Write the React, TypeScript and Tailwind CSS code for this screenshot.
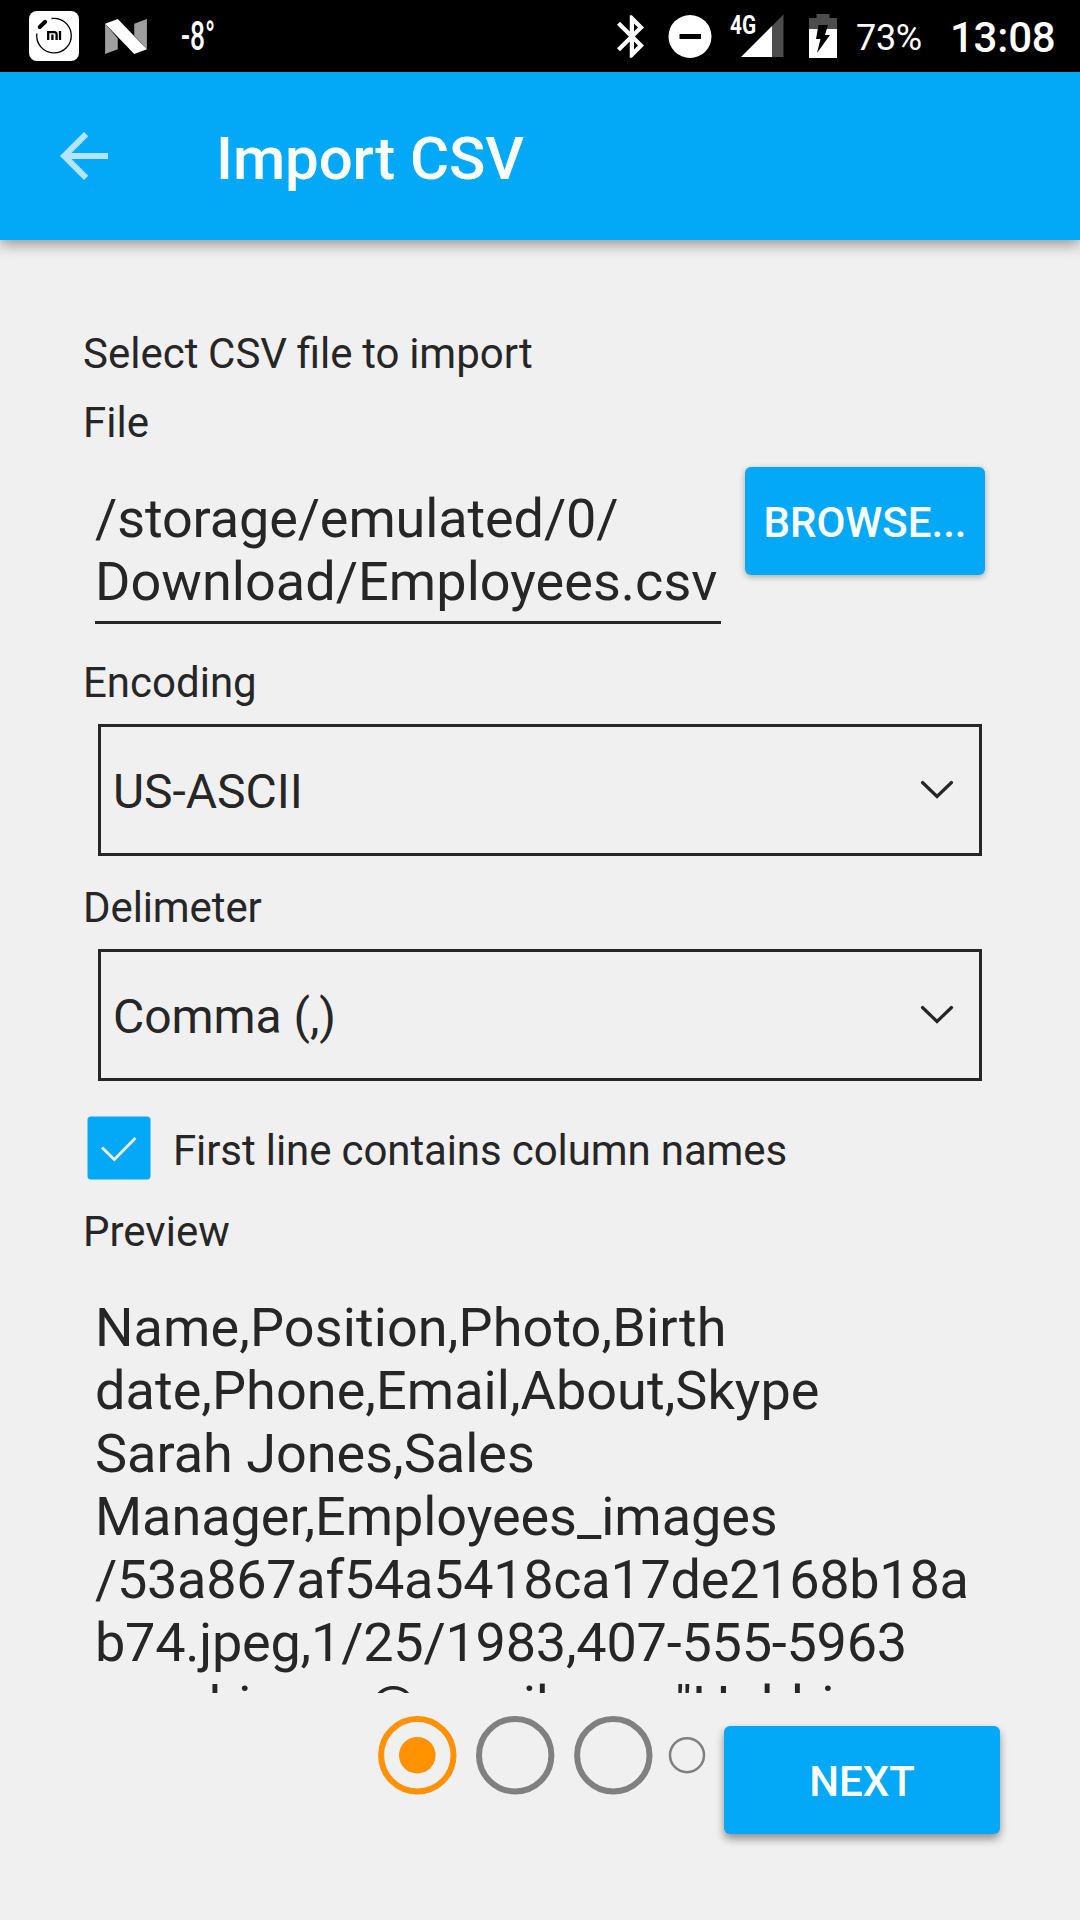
import React from "react";

const preview = [
  { text: "Name,Position,Photo,Birth", tracking: "tracking-[0.100px]" },
  { text: "date,Phone,Email,About,Skype", tracking: "tracking-[0.050px]" },
  { text: "Sarah Jones,Sales", tracking: "" },
  { text: "Manager,Employees_images", tracking: "tracking-[-0.040px]" },
  { text: "/53a867af54a5418ca17de2168b18a", tracking: "tracking-[-0.290px]" },
  { text: "b74.jpeg,1/25/1983,407-555-5963", tracking: "tracking-[-0.230px]" },
  { text: ',sarahjones@gmail.com,"Hobbies', tracking: "tracking-[-0.140px]" },
];

function StatusBar() {
  return (
    <div className="flex h-[72px] shrink-0 items-center bg-black pl-[29px] text-white">
      <svg className="h-[50px] w-[50px] shrink-0" viewBox="0 0 50 50">
        <rect x="0" y="0" width="50" height="50" rx="8" fill="#fff" />
        <path d="M22.500 7.500A17.300 17.300 0 1 1 7.800 22.500" fill="none" stroke="#000" strokeWidth="1.300" />
        <path d="M10.800 16L16.200 10.800" stroke="#000" strokeWidth="4" strokeLinecap="round" />
        <path d="M19.200 29V21.200H25.200Q27.600 21.200 27.600 23.600V29M23.400 23.600V29M31 20V29" fill="none" stroke="#000" strokeWidth="2.300" />
      </svg>
      <svg className="ml-[26px] h-[35px] w-[42px] shrink-0" viewBox="0 0 43 36">
        <path d="M0 5L13 20V31L0 36zM43 0L30 5V17L43 31z" fill="#9f9f9f" />
        <path d="M0 5L13 0L43 31L30 36z" fill="#fff" />
      </svg>
      <div className="ml-[34px] flex w-[34px] items-center pt-[1px] text-[40px] font-medium leading-[44px]">
        <span className="origin-left scale-x-[0.660] whitespace-nowrap">-8°</span>
      </div>
      <svg className="ml-[402px] h-[43px] w-[27px] shrink-0" viewBox="5 2 12.710 20">
        <path
          fill="#fff"
          d="M17.710 7.710L12 2h-1v7.590L6.410 5 5 6.410 10.590 12 5 17.590 6.410 19 11 14.410V22h1l5.710-5.710-4.300-4.290 4.300-4.290zM13 5.830l1.880 1.880L13 9.590V5.830zm1.880 10.460L13 18.170v-3.760l1.880 1.880z"
        />
      </svg>
      <svg className="ml-[24px] h-[44px] w-[44px] shrink-0" viewBox="0 0 44 44">
        <circle cx="22" cy="22.500" r="21.500" fill="#fff" />
        <rect x="11.500" y="20" width="21.500" height="5" fill="#000" />
      </svg>
      <div className="relative ml-[18px] h-[44px] w-[54px] shrink-0">
        <svg className="h-[44px] w-[54px]" viewBox="0 0 54 44">
          <path d="M53.500 0.500V43H42V12z" fill="#4d4d4d" />
          <path d="M42 12V43H11z" fill="#fff" />
        </svg>
        <span className="absolute left-0 top-[-2px] origin-left scale-x-[0.800] text-[26px] font-bold leading-[26px]">4G</span>
      </div>
      <svg className="ml-[25px] h-[44px] w-[28px] shrink-0" viewBox="0 0 28 44">
        <path d="M0 4H7.500V0H20.500V4H28V15H0z" fill="#4d4d4d" />
        <path d="M0 15H28V44H0z" fill="#fff" />
        <path d="M9.500 11H19L16 21H21L8 39L11.500 25H7z" fill="#000" />
      </svg>
      <span className="ml-[19px] pt-[3px] text-[36px] leading-[42px] tracking-[-0.300px]">73%</span>
      <span className="ml-[28px] pt-[3px] text-[42px] font-medium leading-[50px] tracking-[-0.200px]">13:08</span>
    </div>
  );
}

function Select({ value }: { value: string }) {
  return (
    <div className="ml-[15px] flex h-[132px] w-[884px] items-center justify-between border-[3px] border-[#262626] pl-[12px] pr-[24px]">
      <span className="pt-[3px] text-[48px] leading-[56px] tracking-[-0.050px]">{value}</span>
      <svg className="h-[20px] w-[36px]" viewBox="0 0 36 20">
        <path d="M3.500 2.500L18 16.500L32.500 2.500" fill="none" stroke="#262626" strokeWidth="3.200" strokeLinecap="round" />
      </svg>
    </div>
  );
}

function Label({ children, className }: { children: React.ReactNode; className: string }) {
  return <div className={"h-[49px] text-[42px] leading-[49px] " + className}>{children}</div>;
}

export default function App() {
  return (
    <div className="flex h-[1920px] w-[1080px] flex-col overflow-hidden bg-[#f0f0f0] font-['Roboto',sans-serif] text-[#262626]">
      <StatusBar />
      <header className="flex h-[168px] shrink-0 items-center bg-[#03a9f6] pl-12 text-white shadow-[0_4px_14px_rgba(0,0,0,0.400)]">
        <svg className="h-[72px] w-[72px]" viewBox="0 0 24 24">
          <path d="M20 11H7.830l5.590-5.590L12 4l-8 8 8 8 1.410-1.410L7.830 13H20v-2z" fill="#fff" fillOpacity="0.700" />
        </svg>
        <h1 className="ml-[96px] pt-[6px] text-[60px] font-medium leading-[70px] tracking-[-0.100px]">Import CSV</h1>
      </header>
      <main className="flex flex-col pl-[83px] pt-[89px]">
        <Label className="[font-variant-ligatures:common-ligatures] [word-spacing:-0.750px]">Select CSV file to import</Label>
        <Label className="mt-[20px]">File</Label>
        <div className="flex items-start pl-[12px]">
          <div className="mt-[40px] h-[137px] w-[626px] border-b-[3px] border-[#262626] text-[54px] leading-[63px]">
            <div className="whitespace-nowrap tracking-[-0.120px]">/storage/emulated/0/</div>
            <div className="whitespace-nowrap tracking-[0.050px]">Download/Employees.csv</div>
          </div>
          <button className="ml-[24px] mt-[20px] flex h-[108px] w-[240px] items-center justify-center rounded-[6px] bg-[#03a9f6] pt-[3px] text-[42px] font-medium leading-[50px] text-white shadow-[0_2px_6px_rgba(0,0,0,0.300)]">
            BROWSE...
          </button>
        </div>
        <Label className="mt-[34px]">Encoding</Label>
        <div className="mt-[17px]"><Select value="US-ASCII" /></div>
        <Label className="mt-[27px] tracking-[-0.100px]">Delimeter</Label>
        <div className="mt-[17px]"><Select value="Comma (,)" /></div>
        <div className="mt-[35px] flex h-[64px] items-center pl-[4px]">
          <svg className="h-[64px] w-[64px]" viewBox="0 0 64 64">
            <rect x="0.500" y="0.500" width="63" height="63" rx="3.500" fill="#03a9f6" />
            <path d="M15 31.500L27.300 43.500L48.500 22" fill="none" stroke="#f0f0f0" strokeWidth="2.800" />
          </svg>
          <span className="ml-[22px] pt-[5px] text-[42px] leading-[49px] tracking-[-0.110px]">First line contains column names</span>
        </div>
        <Label className="mt-[27px]">Preview</Label>
        <div className="ml-[12px] mt-[40px] h-[397px] overflow-hidden text-[54px] leading-[63px]">
          {preview.map((line) => (
            <div key={line.text} className={"whitespace-nowrap " + line.tracking}>{line.text}</div>
          ))}
        </div>
      </main>
      <footer className="flex items-start pl-[377px] pt-[22px]">
        <svg className="h-[80px] w-[330px]" viewBox="0 0 330 80">
          <g fill="none" strokeWidth="6">
            <circle cx="40.300" cy="40.200" r="36.200" stroke="#ff9200" />
            <circle cx="138.200" cy="40.200" r="36.200" stroke="#808080" />
            <circle cx="236.300" cy="40.200" r="36.200" stroke="#808080" />
            <circle cx="310" cy="40.200" r="17" stroke="#808080" strokeWidth="2.500" />
          </g>
          <circle cx="40.300" cy="40.200" r="18.300" fill="#ff9200" />
        </svg>
        <button className="ml-[17px] mt-[11px] flex h-[108px] w-[276px] items-center justify-center rounded-[6px] bg-[#03a9f6] pt-[3px] text-[42px] font-medium leading-[50px] text-white shadow-[0_5px_8px_rgba(0,0,0,0.400)]">
          NEXT
        </button>
      </footer>
    </div>
  );
}
